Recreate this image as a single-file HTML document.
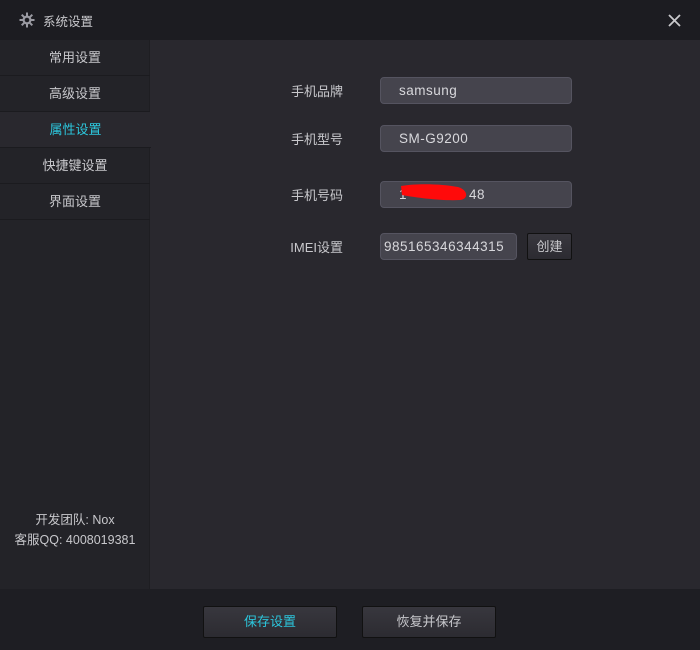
<!DOCTYPE html>
<html><head><meta charset="utf-8"><style>
*{margin:0;padding:0;box-sizing:border-box}
body{width:700px;height:650px;background:#29282e;font-family:"Liberation Sans","Noto Sans CJK SC",sans-serif;font-size:13px;color:#c8c8cc;position:relative;overflow:hidden}
.abs{position:absolute}
.title{left:0;top:0;width:700px;height:40px;background:#1c1c21}
.side{left:0;top:40px;width:150px;height:549px;background:#232328;border-right:1px solid #1e1e22}
.item{position:absolute;left:0;width:150px;height:36px;line-height:35px;text-align:center;border-bottom:1px solid #1b1b1f;color:#c8c8cc}
.bottom{left:0;top:589px;width:700px;height:61px;background:#1e1e23}
.lbl{position:absolute;width:80px;text-align:right;color:#c8c8cc}
.inp{position:absolute;background:#45444d;border:1px solid #555460;border-radius:4px;height:27px;line-height:25px;color:#d8d8dc;padding-left:18px;font-size:13.5px;letter-spacing:.5px}
.btn{position:absolute;height:32px;border:1px solid #111;border-radius:2px;background:linear-gradient(#38373e,#2c2b31);text-align:center;line-height:30px;color:#c8c8cc}
</style></head><body>
<div class="abs title"></div>
<svg class="abs" style="left:19px;top:12px" width="16" height="16" viewBox="0 0 16 16"><g stroke="#9a9aa2" stroke-width="2"><line x1="8" y1="0.5" x2="8" y2="15.5"/><line x1="0.5" y1="8" x2="15.5" y2="8"/><line x1="2.7" y1="2.7" x2="13.3" y2="13.3"/><line x1="13.3" y1="2.7" x2="2.7" y2="13.3"/></g><circle cx="8" cy="8" r="4.5" fill="#9a9aa2"/><circle cx="8" cy="8" r="2.3" fill="#1c1c21"/></svg>
<div class="abs" style="left:43px;top:11px;color:#c8c8cc;font-size:12.5px">系统设置</div>
<svg class="abs" style="left:668px;top:14px" width="13" height="13"><path d="M1 1L12 12M12 1L1 12" stroke="#c8c8cc" stroke-width="1.8"/></svg>
<div class="abs side">
<div class="item" style="top:0">常用设置</div>
<div class="item" style="top:36px">高级设置</div>
<div class="item" style="top:72px;color:#2cc6dc;background:#29282e;width:151px">属性设置</div>
<div class="item" style="top:108px">快捷键设置</div>
<div class="item" style="top:144px">界面设置</div>
<div style="position:absolute;top:470px;width:150px;text-align:center;line-height:20px;font-size:12.5px">开发团队: Nox<br>客服QQ: 4008019381</div>
</div>
<div class="abs bottom"></div>
<div class="lbl" style="left:263px;top:81px">手机品牌</div>
<div class="lbl" style="left:263px;top:129px">手机型号</div>
<div class="lbl" style="left:263px;top:185px">手机号码</div>
<div class="lbl" style="left:263px;top:237px">IMEI设置</div>
<div class="inp" style="left:380px;top:77px;width:192px">samsung</div>
<div class="inp" style="left:380px;top:125px;width:192px">SM-G9200</div>
<div class="inp" style="left:380px;top:181px;width:192px">1<span style="padding-left:62px">48</span></div>
<svg class="abs" style="left:398px;top:182px" width="72" height="22"><path d="M3 4C20 1 45 2 60 5C70 8 71 17 62 18C45 19 20 16 4 13Z" fill="#ff0a0a"/></svg>
<div class="inp" style="left:380px;top:233px;width:137px;padding-left:3px">985165346344315</div>
<div class="btn" style="left:527px;top:233px;width:45px;height:27px;line-height:25px">创建</div>
<div class="btn" style="left:203px;top:606px;width:134px;color:#2cc6dc">保存设置</div>
<div class="btn" style="left:362px;top:606px;width:134px">恢复并保存</div>
</body></html>
